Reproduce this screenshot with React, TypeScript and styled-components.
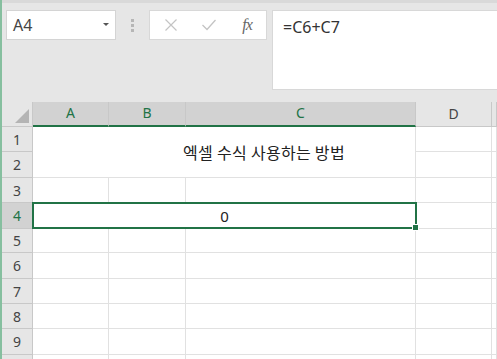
import styled, { createGlobalStyle } from "styled-components";
import { Fragment } from "react";

const green = "#217346";
const headerBorder = "#c8c8c8";
const gridLine = "#e1e1e1";

const GlobalStyle = createGlobalStyle`
  html, body {
    margin: 0;
    padding: 0;
    background: #e6e6e6;
    overflow: hidden;
  }
  body {
    font-family: "Noto Sans", "Noto Sans CJK KR", sans-serif;
  }
`;

const Screen = styled.div`
  width: 497px;
  height: 359px;
  overflow: hidden;
  border-left: 2px solid #86bf9f;
  box-sizing: border-box;
  background: #e6e6e6;
  display: flex;
  flex-direction: column;
`;

const TopStrip = styled.div`
  height: 3px;
  background: #d9d9d9;
  flex: none;
`;

const FormulaBar = styled.div`
  display: flex;
  align-items: flex-start;
  padding: 7px 0 0 4px;
  height: 99px;
  box-sizing: border-box;
  flex: none;
`;

const NameBox = styled.div`
  width: 110px;
  height: 30px;
  box-sizing: border-box;
  background: #fff;
  border: 1px solid #d4d4d4;
  display: flex;
  align-items: center;
  justify-content: space-between;
  padding: 0 6px 0 6px;
  font-size: 16px;
  color: #444;
`;

const DropArrow = styled.span`
  width: 0;
  height: 0;
  border-left: 3px solid transparent;
  border-right: 3px solid transparent;
  border-top: 3px solid #555;
  margin-top: -2px;
`;

const Grip = styled.div`
  width: 33px;
  height: 30px;
  display: flex;
  flex-direction: column;
  align-items: center;
  justify-content: center;
  gap: 2px;
`;

const GripDot = styled.span`
  width: 3px;
  height: 3px;
  background: #b6b6b6;
`;

const ButtonBox = styled.div`
  width: 118px;
  height: 30px;
  box-sizing: border-box;
  background: #fff;
  border: 1px solid #d8d8d8;
  display: flex;
  align-items: center;
  padding-left: 13px;
  gap: 22px;
`;

const IconSlot = styled.span`
  width: 16px;
  height: 16px;
  display: flex;
  align-items: center;
  justify-content: center;
`;

const Fx = styled.span`
  font-family: "Liberation Serif", "DejaVu Serif", serif;
  font-style: italic;
  font-size: 16px;
  color: #666;
  letter-spacing: -1px;
  line-height: 1;
`;

const FormulaInput = styled.div`
  margin-left: 5px;
  flex: 1;
  height: 80px;
  box-sizing: border-box;
  background: #fff;
  border: 1px solid #d8d8d8;
  border-right: none;
  padding: 5px 10px;
  font-size: 16px;
  color: #333;
`;

const Sheet = styled.div`
  display: grid;
  grid-template-columns: 31px 76px 77px 230px 76px 1fr;
  grid-template-rows: 25px 25px 26px 25px 26px 24px 26px 25px 25px 26px 25px;
  background: #fff;
  flex: none;
`;

const Corner = styled.div`
  background: #e6e6e6;
  border-right: 1px solid ${headerBorder};
  border-bottom: 1px solid ${headerBorder};
  position: relative;
  &::after {
    content: "";
    position: absolute;
    right: 3px;
    bottom: 3px;
    width: 0;
    height: 0;
    border-left: 14px solid transparent;
    border-bottom: 14px solid #b4b4b4;
  }
`;

const ColHeader = styled.div<{ $selected?: boolean }>`
  background: ${(p) => (p.$selected ? "#d2d2d2" : "#e6e6e6")};
  color: ${(p) => (p.$selected ? green : "#444")};
  border-right: 1px solid ${headerBorder};
  border-bottom: ${(p) => (p.$selected ? `2px solid ${green}` : `1px solid ${headerBorder}`)};
  display: flex;
  align-items: center;
  justify-content: center;
  font-size: 14px;
  padding-bottom: 2px;
`;

const RowHeader = styled.div<{ $selected?: boolean }>`
  background: ${(p) => (p.$selected ? "#d2d2d2" : "#e6e6e6")};
  color: ${(p) => (p.$selected ? green : "#444")};
  border-right: 1px solid ${headerBorder};
  border-bottom: 1px solid ${headerBorder};
  display: flex;
  align-items: center;
  justify-content: center;
  font-size: 14px;
`;

const Cell = styled.div`
  border-right: 1px solid ${gridLine};
  border-bottom: 1px solid ${gridLine};
`;

const TitleCell = styled.div`
  grid-column: 2 / 5;
  grid-row: 2 / 4;
  border-right: 1px solid ${gridLine};
  border-bottom: 1px solid ${gridLine};
  display: flex;
  align-items: center;
  justify-content: center;
  padding-left: 80px;
  font-family: "Noto Sans CJK KR", sans-serif;
  font-size: 16px;
  letter-spacing: 0.3px;
  color: #222;
`;

const ActiveCell = styled.div`
  grid-column: 2 / 5;
  grid-row: 5 / 6;
  margin: -1px -1px 0 -1px;
  border: 2px solid ${green};
  position: relative;
  display: flex;
  align-items: center;
  justify-content: center;
  font-size: 15px;
  color: #222;
`;

const FillHandle = styled.span`
  position: absolute;
  right: -4px;
  bottom: -4px;
  width: 5px;
  height: 5px;
  background: ${green};
  border: 1px solid #fff;
`;

const columns = ["A", "B", "C", "D", ""];

export default function App() {
  const plainRows = [3, 5, 6, 7, 8, 9, 10];
  return (
    <Screen>
      <GlobalStyle />
      <TopStrip />
      <FormulaBar>
        <NameBox>
          A4
          <DropArrow />
        </NameBox>
        <Grip>
          <GripDot />
          <GripDot />
          <GripDot />
        </Grip>
        <ButtonBox>
          <IconSlot>
            <svg width="14" height="14" viewBox="0 0 14 14">
              <path d="M1.5 1.5 L12.5 12.5 M12.5 1.5 L1.5 12.5" stroke="#c4c4c4" strokeWidth="1.2" fill="none" />
            </svg>
          </IconSlot>
          <IconSlot>
            <svg width="16" height="14" viewBox="0 0 16 14">
              <path d="M1.5 7 L6 11.5 L14.5 2" stroke="#c4c4c4" strokeWidth="1.3" fill="none" />
            </svg>
          </IconSlot>
          <IconSlot>
            <Fx>fx</Fx>
          </IconSlot>
        </ButtonBox>
        <FormulaInput>=C6+C7</FormulaInput>
      </FormulaBar>
      <Sheet>
        <Corner />
        {columns.map((c, i) => (
          <ColHeader key={i} $selected={i < 3}>
            {c}
          </ColHeader>
        ))}

        {[1, 2].map((r) => (
          <RowHeader key={r} style={{ gridRow: r + 1, gridColumn: 1 }}>
            {r}
          </RowHeader>
        ))}
        <TitleCell>엑셀 수식 사용하는 방법</TitleCell>
        <Cell style={{ gridRow: 2, gridColumn: 5 }} />
        <Cell style={{ gridRow: 2, gridColumn: 6 }} />
        <Cell style={{ gridRow: 3, gridColumn: 5 }} />
        <Cell style={{ gridRow: 3, gridColumn: 6 }} />

        <RowHeader $selected style={{ gridRow: 5, gridColumn: 1 }}>
          4
        </RowHeader>
        <ActiveCell>
          0
          <FillHandle />
        </ActiveCell>
        <Cell style={{ gridRow: 5, gridColumn: 5 }} />
        <Cell style={{ gridRow: 5, gridColumn: 6 }} />

        {plainRows.map((r) => (
          <Fragment key={r}>
            {/* row 10 sits below the window edge, so its label is left out */}
            <RowHeader style={{ gridRow: r + 1, gridColumn: 1 }}>
              {r < 10 ? r : ""}
            </RowHeader>
            {columns.map((_, i) => (
              <Cell key={i} style={{ gridRow: r + 1, gridColumn: i + 2 }} />
            ))}
          </Fragment>
        ))}
      </Sheet>
    </Screen>
  );
}
